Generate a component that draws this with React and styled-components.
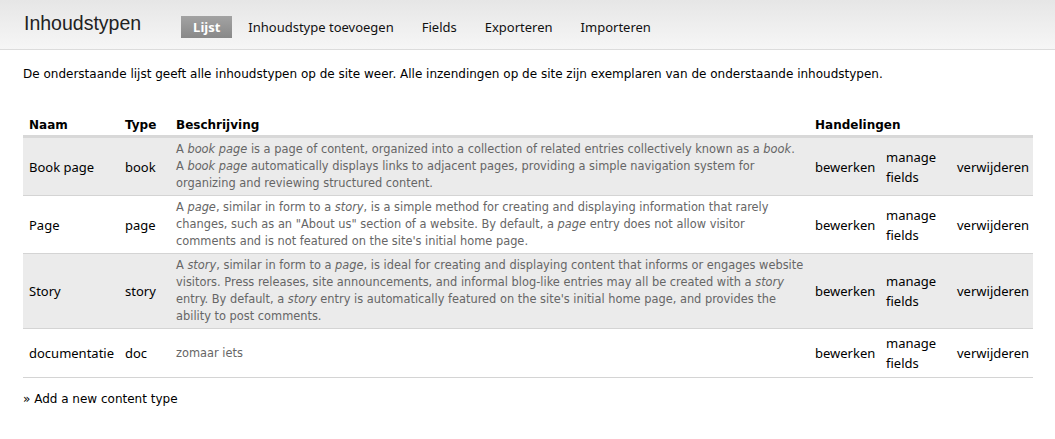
import React from "react";
import styled, { createGlobalStyle } from "styled-components";

const Global = createGlobalStyle`
  html, body { margin: 0; padding: 0; background: #fff; }
  body { font-family: "DejaVu Sans", sans-serif; color: #000; }
`;

const Page = styled.div`
  width: 1055px;
`;

const Header = styled.header`
  display: flex;
  align-items: center;
  height: 50px;
  padding: 0 23px 0 24px;
  background: linear-gradient(#e6e6e6, #f6f6f6);
  border-bottom: 1px solid #dcdcdc;
  box-sizing: border-box;
`;

const Title = styled.h1`
  margin: 0 40px 2px 0;
  font-family: "Liberation Sans", Arial, sans-serif;
  font-weight: normal;
  font-size: 19.5px;
  color: #222;
`;

const Tabs = styled.nav`
  display: flex;
  gap: 4px;
  margin-top: 4px;
`;

const Tab = styled.a`
  display: block;
  padding: 0 12px;
  height: 22px;
  line-height: 22px;
  font-family: "Noto Sans", sans-serif;
  font-size: 13px;
  color: ${(p) => (p.$active ? "#fff" : "#111")};
  font-weight: ${(p) => (p.$active ? "bold" : "normal")};
  background: ${(p) => (p.$active ? "linear-gradient(#a3a3a3, #888)" : "transparent")};
  text-decoration: none;
`;

const Content = styled.main`
  padding: 16px 22px 0 23px;
`;

const Intro = styled.p`
  margin: 0 0 31px;
  font-size: 12px;
  line-height: 16px;
`;

const Table = styled.table`
  width: 1010px;
  border-collapse: collapse;
  table-layout: fixed;
`;

const Th = styled.th`
  text-align: left;
  font-size: 12px;
  font-weight: bold;
  padding: 5px 6px 3px;
  border-bottom: 3px solid #d8d8d8;
`;

const Row = styled.tr`
  background: ${(p) => (p.$odd ? "#ebebeb" : "#fff")};
  border-bottom: 1px solid #d4d4d4;
`;

const Cell = styled.td`
  padding: 4px 6px;
  font-family: "Noto Sans", sans-serif;
  font-size: 13px;
  line-height: 20px;
  vertical-align: middle;
`;

const Desc = styled.td`
  padding: 3px 4px 3px 6px;
  font-size: 11.4px;
  line-height: 17px;
  color: #666;
  vertical-align: middle;
  em { font-style: italic; }
`;

const AddLink = styled.p`
  margin: 14px 0 0;
  font-size: 12px;
`;

const rows = [
  {
    name: "Book page",
    type: "book",
    desc: (
      <>
        A <em>book page</em> is a page of content, organized into a collection of related entries collectively known as a <em>book</em>. A <em>book page</em> automatically displays links to adjacent pages, providing a simple navigation system for organizing and reviewing structured content.
      </>
    ),
  },
  {
    name: "Page",
    type: "page",
    desc: (
      <>
        A <em>page</em>, similar in form to a <em>story</em>, is a simple method for creating and displaying information that rarely changes, such as an "About us" section of a website. By default, a <em>page</em> entry does not allow visitor comments and is not featured on the site's initial home page.
      </>
    ),
  },
  {
    name: "Story",
    type: "story",
    desc: (
      <>
        A <em>story</em>, similar in form to a <em>page</em>, is ideal for creating and displaying content that informs or engages website visitors. Press releases, site announcements, and informal blog-like entries may all be created with a <em>story</em> entry. By default, a <em>story</em> entry is automatically featured on the site's initial home page, and provides the ability to post comments.
      </>
    ),
  },
  { name: "documentatie", type: "doc", desc: "zomaar iets" },
];

export default function App() {
  return (
    <Page>
      <Global />
      <Header>
        <Title>Inhoudstypen</Title>
        <Tabs>
          <Tab $active>Lijst</Tab>
          <Tab>Inhoudstype toevoegen</Tab>
          <Tab>Fields</Tab>
          <Tab>Exporteren</Tab>
          <Tab>Importeren</Tab>
        </Tabs>
      </Header>
      <Content>
        <Intro>
          De onderstaande lijst geeft alle inhoudstypen op de site weer. Alle inzendingen op de site zijn exemplaren van de onderstaande inhoudstypen.
        </Intro>
        <Table>
          <colgroup>
            <col style={{ width: 96 }} />
            <col style={{ width: 51 }} />
            <col style={{ width: 639 }} />
            <col style={{ width: 71 }} />
            <col style={{ width: 71 }} />
            <col style={{ width: 82 }} />
          </colgroup>
          <thead>
            <tr>
              <Th>Naam</Th>
              <Th>Type</Th>
              <Th>Beschrijving</Th>
              <Th colSpan={3}>Handelingen</Th>
            </tr>
          </thead>
          <tbody>
            {rows.map((r, i) => (
              <Row key={r.type} $odd={i % 2 === 0}>
                <Cell>{r.name}</Cell>
                <Cell>{r.type}</Cell>
                <Desc>{r.desc}</Desc>
                <Cell>bewerken</Cell>
                <Cell>manage fields</Cell>
                <Cell>verwijderen</Cell>
              </Row>
            ))}
          </tbody>
        </Table>
        <AddLink>» Add a new content type</AddLink>
      </Content>
    </Page>
  );
}
